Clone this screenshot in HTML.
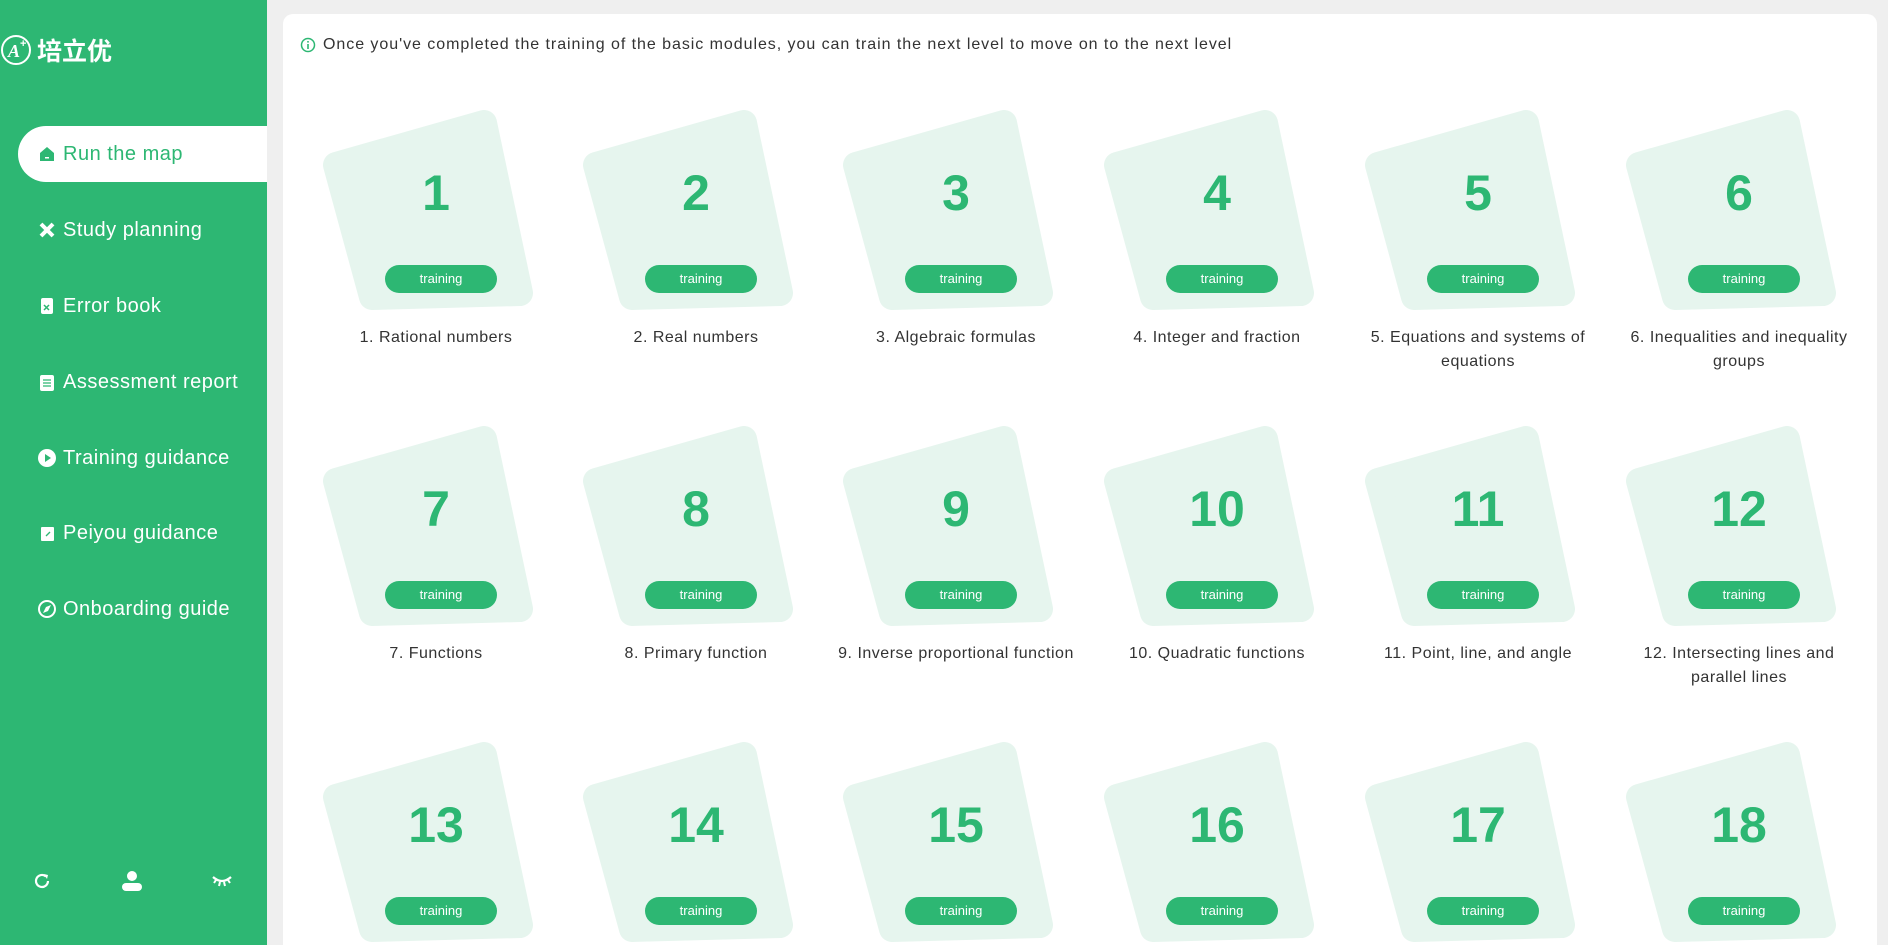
<!DOCTYPE html>
<html><head><meta charset="utf-8">
<style>
*{margin:0;padding:0;box-sizing:border-box}
html,body{width:1888px;height:945px;overflow:hidden}
body{background:#efefef;font-family:"Liberation Sans","Noto Sans CJK SC",sans-serif;position:relative}
#wrap{position:absolute;left:0;top:0;width:1888px;height:945px;overflow:hidden}
#side{position:absolute;left:0;top:0;width:267px;height:945px;background:#2db773}
.logo{position:absolute;left:0;top:30px;color:#fff;font-size:25px;font-weight:bold;display:flex;align-items:center}
.mi{position:absolute;left:38px;color:#fff;font-size:20px;letter-spacing:.5px;height:30px;line-height:30px;display:flex;align-items:center}
.mi svg{width:18px;height:18px;margin-right:7px}
.act{position:absolute;left:18px;top:126px;width:249px;height:56px;background:#fff;border-radius:28px 0 0 28px}
#panel{position:absolute;left:283px;top:14px;width:1594px;height:960px;background:#fff;border-radius:10px}
.info{position:absolute;left:300px;top:36px;font-size:16px;letter-spacing:.95px;color:#333;display:flex;align-items:center}
.card{position:absolute;width:260px;height:300px}
.card svg{position:absolute;left:0;top:0}
.num{position:absolute;left:0;width:260px;top:76px;height:48px;line-height:48px;text-align:center;color:#2db773;font-size:50px;font-weight:bold}
.btn{position:absolute;left:79px;top:172px;width:112px;height:28px;border-radius:14px;background:#2db773;color:#fff;font-size:13px;line-height:28px;text-align:center}
.lab{position:absolute;left:-20px;width:300px;top:233px;text-align:center;color:#333;font-size:16px;letter-spacing:.5px;line-height:24px;white-space:nowrap}
</style></head><body><div id="wrap">
<div id="side">
<div class="logo">
<svg width="38" height="40" viewBox="0 0 38 40"><circle cx="16" cy="20" r="14" fill="none" stroke="#fff" stroke-width="2"/><text x="8" y="27" fill="#fff" font-size="18" font-style="italic" font-family="Liberation Serif">A</text><text x="20" y="17" fill="#fff" font-size="11">+</text></svg>
<span style="margin-left:-1px">培立优</span></div>
<div class="act"></div>
<div class="mi" style="top:139px;color:#2db773"><svg viewBox="0 0 18 18"><path d="M2 8L9 2l7 6v8H2z" fill="#2db773"/><rect x="7" y="12" width="4" height="1.5" fill="#fff"/></svg>Run the map</div>
<div class="mi" style="top:215px"><svg viewBox="0 0 18 18"><path d="M3 3l12 12M15 3L3 15" stroke="#fff" stroke-width="4"/></svg>Study planning</div>
<div class="mi" style="top:291px"><svg viewBox="0 0 18 18"><rect x="3" y="1" width="12" height="16" rx="2" fill="#fff"/><path d="M6 8l5 5M11 8l-5 5" stroke="#2db773" stroke-width="1.5"/></svg>Error book</div>
<div class="mi" style="top:367px"><svg viewBox="0 0 18 18"><rect x="2" y="2" width="14" height="16" rx="2" fill="#fff"/><path d="M5 7h8M5 10h8M5 13h8" stroke="#2db773" stroke-width="1.3"/></svg>Assessment report</div>
<div class="mi" style="top:443px"><svg viewBox="0 0 18 18"><circle cx="9" cy="9" r="9" fill="#fff"/><path d="M7 5l6 4-6 4z" fill="#2db773"/></svg>Training guidance</div>
<div class="mi" style="top:518px"><svg viewBox="0 0 18 18"><rect x="3" y="3" width="13" height="14" rx="1" fill="#fff"/><path d="M8 12l4-4" stroke="#2db773" stroke-width="1.3"/></svg>Peiyou guidance</div>
<div class="mi" style="top:594px"><svg viewBox="0 0 18 18"><circle cx="9" cy="9" r="8" fill="none" stroke="#fff" stroke-width="2"/><path d="M5 13l3-6 5-2-3 6z" fill="#fff"/></svg>Onboarding guide</div>
<svg style="position:absolute;left:33px;top:872px" width="18" height="18" viewBox="0 0 18 18"><path d="M15 9a6 6 0 1 1-2-4.5" fill="none" stroke="#fff" stroke-width="2.2"/><path d="M11 2l4 1-1 4z" fill="#fff"/></svg>
<svg style="position:absolute;left:121px;top:870px" width="22" height="22" viewBox="0 0 22 22"><circle cx="11" cy="6" r="5" fill="#fff"/><rect x="1" y="13" width="20" height="8" rx="4" fill="#fff"/></svg>
<svg style="position:absolute;left:211px;top:874px" width="22" height="14" viewBox="0 0 22 14"><path d="M2 3q9 8 18 0" fill="none" stroke="#fff" stroke-width="2.2"/><path d="M5 6l-2 3M9 8l-1 4M13 8l1 4M17 6l2 3" stroke="#fff" stroke-width="2"/></svg>
</div>
<div id="panel"></div>
<div class="info"><svg width="16" height="16" viewBox="0 0 16 16" style="margin-right:7px"><circle cx="8" cy="8" r="6.5" fill="none" stroke="#2db773" stroke-width="1.5"/><rect x="7.2" y="7" width="1.6" height="5" fill="#2db773"/><rect x="7.2" y="4" width="1.6" height="1.6" fill="#2db773"/></svg>Once you've completed the training of the basic modules, you can train the next level to move on to the next level</div>

<div class="card" style="left:306px;top:93px"><svg width="260" height="300"><polygon points="30,72 178,30 214,200 66,204" fill="#e6f5ee" stroke="#e6f5ee" stroke-width="26" stroke-linejoin="round"/></svg><div class="num">1</div><div class="btn">training</div><div class="lab">1. Rational numbers</div></div>
<div class="card" style="left:566px;top:93px"><svg width="260" height="300"><polygon points="30,72 178,30 214,200 66,204" fill="#e6f5ee" stroke="#e6f5ee" stroke-width="26" stroke-linejoin="round"/></svg><div class="num">2</div><div class="btn">training</div><div class="lab">2. Real numbers</div></div>
<div class="card" style="left:826px;top:93px"><svg width="260" height="300"><polygon points="30,72 178,30 214,200 66,204" fill="#e6f5ee" stroke="#e6f5ee" stroke-width="26" stroke-linejoin="round"/></svg><div class="num">3</div><div class="btn">training</div><div class="lab">3. Algebraic formulas</div></div>
<div class="card" style="left:1087px;top:93px"><svg width="260" height="300"><polygon points="30,72 178,30 214,200 66,204" fill="#e6f5ee" stroke="#e6f5ee" stroke-width="26" stroke-linejoin="round"/></svg><div class="num">4</div><div class="btn">training</div><div class="lab">4. Integer and fraction</div></div>
<div class="card" style="left:1348px;top:93px"><svg width="260" height="300"><polygon points="30,72 178,30 214,200 66,204" fill="#e6f5ee" stroke="#e6f5ee" stroke-width="26" stroke-linejoin="round"/></svg><div class="num">5</div><div class="btn">training</div><div class="lab">5. Equations and systems of<br>equations</div></div>
<div class="card" style="left:1609px;top:93px"><svg width="260" height="300"><polygon points="30,72 178,30 214,200 66,204" fill="#e6f5ee" stroke="#e6f5ee" stroke-width="26" stroke-linejoin="round"/></svg><div class="num">6</div><div class="btn">training</div><div class="lab">6. Inequalities and inequality<br>groups</div></div>

<div class="card" style="left:306px;top:409px"><svg width="260" height="300"><polygon points="30,72 178,30 214,200 66,204" fill="#e6f5ee" stroke="#e6f5ee" stroke-width="26" stroke-linejoin="round"/></svg><div class="num">7</div><div class="btn">training</div><div class="lab">7. Functions</div></div>
<div class="card" style="left:566px;top:409px"><svg width="260" height="300"><polygon points="30,72 178,30 214,200 66,204" fill="#e6f5ee" stroke="#e6f5ee" stroke-width="26" stroke-linejoin="round"/></svg><div class="num">8</div><div class="btn">training</div><div class="lab">8. Primary function</div></div>
<div class="card" style="left:826px;top:409px"><svg width="260" height="300"><polygon points="30,72 178,30 214,200 66,204" fill="#e6f5ee" stroke="#e6f5ee" stroke-width="26" stroke-linejoin="round"/></svg><div class="num">9</div><div class="btn">training</div><div class="lab">9. Inverse proportional function</div></div>
<div class="card" style="left:1087px;top:409px"><svg width="260" height="300"><polygon points="30,72 178,30 214,200 66,204" fill="#e6f5ee" stroke="#e6f5ee" stroke-width="26" stroke-linejoin="round"/></svg><div class="num">10</div><div class="btn">training</div><div class="lab">10. Quadratic functions</div></div>
<div class="card" style="left:1348px;top:409px"><svg width="260" height="300"><polygon points="30,72 178,30 214,200 66,204" fill="#e6f5ee" stroke="#e6f5ee" stroke-width="26" stroke-linejoin="round"/></svg><div class="num">11</div><div class="btn">training</div><div class="lab">11. Point, line, and angle</div></div>
<div class="card" style="left:1609px;top:409px"><svg width="260" height="300"><polygon points="30,72 178,30 214,200 66,204" fill="#e6f5ee" stroke="#e6f5ee" stroke-width="26" stroke-linejoin="round"/></svg><div class="num">12</div><div class="btn">training</div><div class="lab">12. Intersecting lines and<br>parallel lines</div></div>

<div class="card" style="left:306px;top:725px"><svg width="260" height="300"><polygon points="30,72 178,30 214,200 66,204" fill="#e6f5ee" stroke="#e6f5ee" stroke-width="26" stroke-linejoin="round"/></svg><div class="num">13</div><div class="btn">training</div></div>
<div class="card" style="left:566px;top:725px"><svg width="260" height="300"><polygon points="30,72 178,30 214,200 66,204" fill="#e6f5ee" stroke="#e6f5ee" stroke-width="26" stroke-linejoin="round"/></svg><div class="num">14</div><div class="btn">training</div></div>
<div class="card" style="left:826px;top:725px"><svg width="260" height="300"><polygon points="30,72 178,30 214,200 66,204" fill="#e6f5ee" stroke="#e6f5ee" stroke-width="26" stroke-linejoin="round"/></svg><div class="num">15</div><div class="btn">training</div></div>
<div class="card" style="left:1087px;top:725px"><svg width="260" height="300"><polygon points="30,72 178,30 214,200 66,204" fill="#e6f5ee" stroke="#e6f5ee" stroke-width="26" stroke-linejoin="round"/></svg><div class="num">16</div><div class="btn">training</div></div>
<div class="card" style="left:1348px;top:725px"><svg width="260" height="300"><polygon points="30,72 178,30 214,200 66,204" fill="#e6f5ee" stroke="#e6f5ee" stroke-width="26" stroke-linejoin="round"/></svg><div class="num">17</div><div class="btn">training</div></div>
<div class="card" style="left:1609px;top:725px"><svg width="260" height="300"><polygon points="30,72 178,30 214,200 66,204" fill="#e6f5ee" stroke="#e6f5ee" stroke-width="26" stroke-linejoin="round"/></svg><div class="num">18</div><div class="btn">training</div></div>
</div></body></html>
